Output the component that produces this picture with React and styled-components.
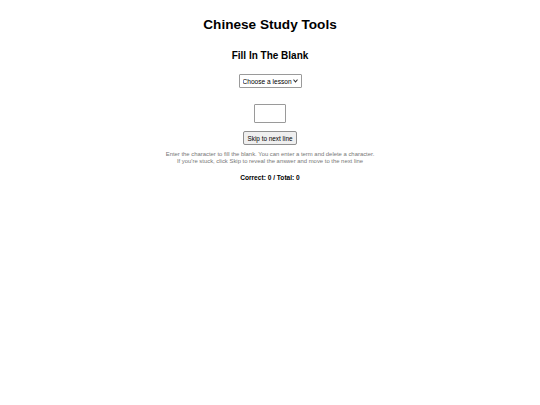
import React from "react";
import styled, { createGlobalStyle } from "styled-components";

const Global = createGlobalStyle`
  html, body { margin: 0; padding: 0; background: #fff; }
  body { font-family: "Liberation Sans", Arial, sans-serif; color: #000; }
`;

const Page = styled.div`
  display: flex;
  flex-direction: column;
  align-items: center;
  padding-top: 16px;
`;

const Title = styled.h1`
  margin: 0;
  font-size: 13.6px;
  font-weight: bold;
  line-height: 17px;
`;

const Subtitle = styled.h2`
  margin: 16px 0 0;
  font-size: 10px;
  font-weight: bold;
  line-height: 13px;
`;

const chevron = encodeURIComponent(
  '<svg xmlns="http://www.w3.org/2000/svg" width="6" height="4" viewBox="0 0 6 4"><path d="M0.6 0.6 L3 3 L5.4 0.6" fill="none" stroke="#333" stroke-width="1.1"/></svg>'
);

const Select = styled.select`
  margin-top: 12px;
  appearance: none;
  -webkit-appearance: none;
  font-family: "Liberation Sans", Arial, sans-serif;
  font-size: 6.6px;
  height: 14px;
  width: 63px;
  box-sizing: border-box;
  padding: 0 0 0 3px;
  border: 1px solid #9a9a9a;
  border-radius: 1px;
  background: #fff url("data:image/svg+xml,${chevron}") no-repeat right 3px center;
  background-size: 5px 3.5px;
  color: #000;
  outline: none;
`;

const Blank = styled.input`
  margin-top: 16px;
  width: 32px;
  height: 19px;
  box-sizing: border-box;
  border: 1px solid #9a9a9a;
  border-radius: 1px;
  padding: 0;
  outline: none;
`;

const Button = styled.button`
  margin-top: 8px;
  font-family: "Liberation Sans", Arial, sans-serif;
  font-size: 6.4px;
  height: 14px;
  width: 54px;
  padding: 0;
  border: 1px solid #8f8f8f;
  border-radius: 2px;
  background: #efefef;
  color: #000;
`;

const Help = styled.p`
  margin: 6px 0 0;
  font-size: 5.9px;
  line-height: 7px;
  color: #777;
  text-align: center;
`;

const Score = styled.p`
  margin: 8px 0 0;
  font-size: 6.6px;
  font-weight: bold;
  line-height: 9px;
`;

export default function App() {
  return (
    <>
      <Global />
      <Page>
        <Title>Chinese Study Tools</Title>
        <Subtitle>Fill In The Blank</Subtitle>
        <Select defaultValue="">
          <option value="">Choose a lesson</option>
        </Select>
        <Blank type="text" />
        <Button>Skip to next line</Button>
        <Help>
          Enter the character to fill the blank. You can enter a term and delete a character.
          <br />
          If you're stuck, click Skip to reveal the answer and move to the next line
        </Help>
        <Score>Correct: 0 / Total: 0</Score>
      </Page>
    </>
  );
}
